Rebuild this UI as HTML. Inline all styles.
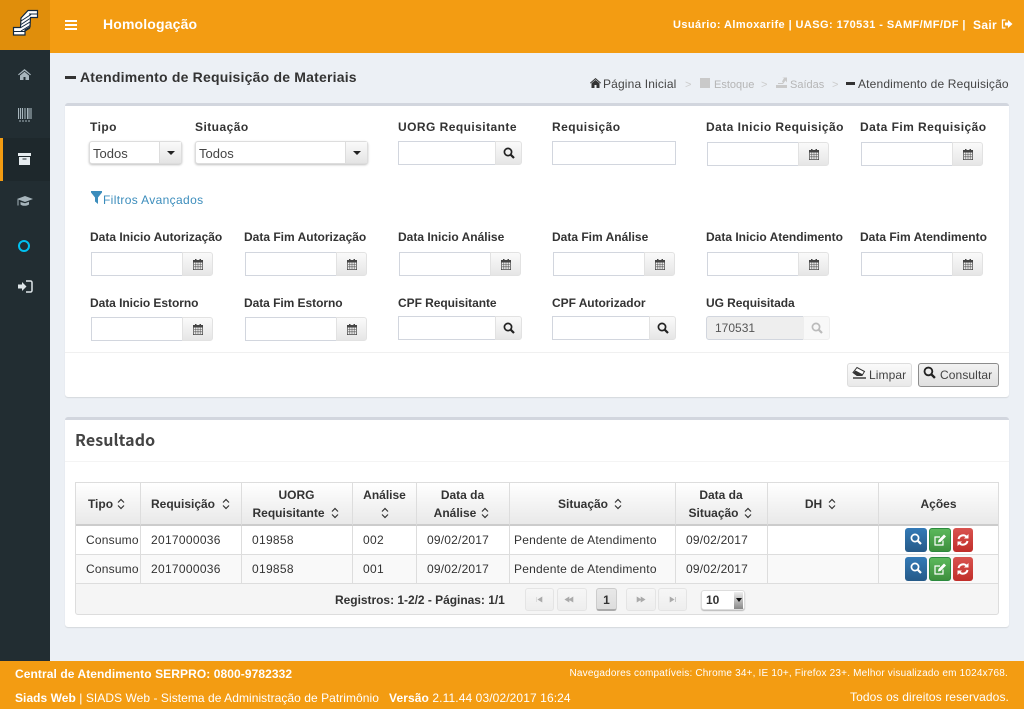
<!DOCTYPE html>
<html lang="pt-BR"><head><meta charset="utf-8"><title>Atendimento de Requisição de Materiais</title>
<style>
*{box-sizing:border-box}
html,body{margin:0;padding:0}
body{width:1024px;height:709px;position:relative;overflow:hidden;background:#ecf0f5;font:12px "Liberation Sans",sans-serif;color:#333}
.a,.l,.i,.b,.c,.t,.h,svg.p{position:absolute}
.l{font-weight:bold;font-size:12px;line-height:14px;color:#333;white-space:nowrap;letter-spacing:0}
.l.r1{letter-spacing:.45px}
.l.r3{letter-spacing:-.05px}
.i{height:24px;background:#fff;border:1px solid #d2d6de;font-size:12px;line-height:22px;padding-left:3px;color:#444}
.b{height:24px;width:32px;background:linear-gradient(#fafafa,#e6e6e6);border:1px solid #e2e2e2;border-radius:0 3px 3px 0}
.b svg{position:absolute;left:9px;top:5px}
.c{height:23px;background:#fff;border:1px solid #ddd;border-radius:3px;box-shadow:0 1px 2px rgba(0,0,0,.25);line-height:23px;padding-left:3px;font-size:13px;color:#444}
.c i{position:absolute;right:0;top:0;bottom:0;width:22px;background:linear-gradient(#fafafa,#e4e4e4);border-left:1px solid #ddd}
.c i:after{content:"";position:absolute;left:7px;top:9px;border:4px solid transparent;border-top:4px solid #222;border-bottom:0}
.t{white-space:nowrap;font-size:12px;line-height:14px;color:#333}
.d{letter-spacing:.2px}
.n{letter-spacing:.3px}
.h{background:linear-gradient(#fff,#e9e9e9);border-right:1px solid #ddd;border-bottom:2px solid #ccc;font-weight:bold;font-size:12px;line-height:18px;text-align:center;color:#333;display:flex;align-items:center;justify-content:center;top:483px;height:43px}
.pg{position:absolute;top:588px;height:23px;width:29px;border:1px solid #e4e4e4;border-radius:3px;background:linear-gradient(#f6f6f6,#eee)}
.act{position:absolute;width:22px;height:24px;border-radius:3px}
.sv{vertical-align:-2px}
.up{position:relative;left:1px}
</style></head>
<body>
<svg width="0" height="0" style="position:absolute">
<symbol id="cal" viewBox="0 0 12 12"><path fill="#444" d="M1 2h2V1h1.500v1h3V1H9v1h2v10H1zM1.700 4.500V11.300h8.600V4.500z"/><path stroke="#555" stroke-width=".6" fill="none" d="M3.800 4.500V11M6 4.500V11M8.200 4.500V11M2 6.500h8M2 8.800h8"/></symbol>
<symbol id="sr" viewBox="0 0 12 12"><circle cx="5" cy="5" r="3.600" fill="none" stroke="currentColor" stroke-width="1.700"/><path d="M7.700 7.700L11 11" stroke="currentColor" stroke-width="2.200"/></symbol>
<symbol id="ed" viewBox="0 0 14 14"><path d="M10 7.500V12H2V4h5" fill="none" stroke="#fff" stroke-width="1.200"/><path d="M5 9.500l.5-2.500L11 1.500l2 2L7.500 9z" fill="#fff"/></symbol>
<symbol id="rf" viewBox="0 0 14 14"><path d="M2.500 6a4.700 4.700 0 0 1 8-2.200" fill="none" stroke="#fff" stroke-width="2"/><path d="M12.500 1v4.500H8z" fill="#fff"/><path d="M11.500 8a4.700 4.700 0 0 1-8 2.200" fill="none" stroke="#fff" stroke-width="2"/><path d="M1.500 13V8.500H6z" fill="#fff"/></symbol>
<symbol id="so" viewBox="0 0 8 12"><path d="M1 4.500L4 1.500l3 3M1 7.500l3 3 3-3" fill="none" stroke="#333" stroke-width="1.200"/></symbol>
</svg>

<!-- top bar -->
<div class="a" style="left:0;top:0;width:1024px;height:53px;background:#f39c12"></div>
<div class="a" style="left:0;top:0;width:50px;height:50px;background:#e08e0b"></div>
<svg class="p" style="left:0;top:0" width="50" height="50" viewBox="0 0 50 50"><path d="M13.500 27.500H20.500L21 18 28 10.500H37.500V17.500H30.500L30 27 25 30V35H13.500z" fill="#fff" stroke="#12283f" stroke-width="1.200"/><path d="M14 31.500H24.500L30 28M21 21L31 14.500M21 24.500L30 18.500M21 27.500L30 22M21 31L30 25.500" fill="none" stroke="#12283f" stroke-width="1"/><path d="M29 14H37.500" stroke="#12283f"/></svg>
<div class="a" style="left:65px;top:20px;width:12px;height:2px;background:#fff"></div>
<div class="a" style="left:65px;top:24px;width:12px;height:2px;background:#fff"></div>
<div class="a" style="left:65px;top:28px;width:12px;height:2px;background:#fff"></div>
<div class="t" style="left:103px;top:16px;font-size:14px;line-height:17px;font-weight:bold;color:#fff;letter-spacing:.15px">Homologação</div>
<div class="t" style="left:673px;top:18px;font-size:11px;font-weight:bold;color:#fff;letter-spacing:.42px">Usuário: Almoxarife | UASG: 170531 - SAMF/MF/DF |</div>
<div class="t" style="left:973px;top:18px;font-size:12px;color:#fff;letter-spacing:.35px;font-weight:bold">Sair</div>
<svg class="p" style="left:1001px;top:18px" width="12" height="12" viewBox="0 0 12 12"><path d="M4.500 2H1.500v8h3" fill="none" stroke="#fff" stroke-width="1.300"/><path d="M4 4.500h3V2l4.500 4L7 10V7.500H4z" fill="#fff"/></svg>

<!-- sidebar -->
<div class="a" style="left:0;top:50px;width:50px;height:611px;background:#222d32"></div>
<div class="a" style="left:0;top:138px;width:50px;height:43px;background:#1e282c;border-left:3px solid #f39c12"></div>
<svg class="p" style="left:18px;top:69px" width="13" height="11" viewBox="0 0 13 11"><path d="M6.500 0L13 5.500l-.8.8L6.500 1.700.8 6.300 0 5.500zM2 6.500l4.500-3.700L11 6.500V11H7.500V8h-2v3H2z" fill="#a7b5bc"/></svg>
<svg class="p" style="left:18px;top:108px" width="14" height="14" viewBox="0 0 14 14"><path d="M.5 0v11M2.500 0v11M4.500 0v11M7 0v11M9.500 0v11M11 0v11M13 0v11" stroke="#a7b5bc" stroke-width="1.100"/><path d="M1 13h12" stroke="#a7b5bc" stroke-dasharray="2 1"/></svg>
<svg class="p" style="left:18px;top:153px" width="13" height="12" viewBox="0 0 13 12"><path d="M0 0h13v3H0zM1 4h11v8H1z" fill="#e6ecef"/><path d="M4.500 5.500h4v1h-4z" fill="#222d32"/></svg>
<svg class="p" style="left:17px;top:195px" width="16" height="13" viewBox="0 0 16 13"><path d="M8 1l8 3-8 3-8-3zM3.500 7v2.500C5 11.200 10 11.200 12 9.500V6.700L8 8.200z" fill="#a7b5bc"/><path d="M1 4.500v6" stroke="#a7b5bc"/></svg>
<div class="a" style="left:18px;top:240px;width:12px;height:12px;border:2px solid #00c0ef;border-radius:50%"></div>
<svg class="p" style="left:18px;top:280px" width="15" height="13" viewBox="0 0 15 13"><path d="M0 4.500h4V2l4.500 4.500L4 11V8.500H0z" fill="#dfe6e9"/><path d="M8 1h4.500a1.500 1.500 0 0 1 1.500 1.500v8a1.500 1.500 0 0 1-1.500 1.500H8" fill="none" stroke="#dfe6e9" stroke-width="1.500"/></svg>

<!-- page title & breadcrumb -->
<div class="a" style="left:65px;top:76px;width:11px;height:3px;background:#333"></div>
<div class="t" style="left:80px;top:69px;font-size:14px;line-height:17px;font-weight:bold;letter-spacing:.2px">Atendimento de Requisição de Materiais</div>
<svg class="p" style="left:590px;top:78px" width="11" height="10" viewBox="0 0 11 10"><path d="M5.500 0L11 4.800l-.6.700L5.500 1.400.6 5.500 0 4.800zM1.500 5.300L5.500 2l4 3.300V10H6.500V7h-2v3h-3z" fill="#333"/></svg>
<div class="t" style="left:603px;top:77px;color:#444;letter-spacing:.15px">Página Inicial</div>
<div class="t" style="left:685px;top:78px;color:#ccc;font-size:11px">&gt;</div>
<div class="a" style="left:700px;top:78px;width:10px;height:10px;background:#c9c9c9"></div>
<div class="t" style="left:714px;top:78px;color:#b5b5b5;font-size:11px">Estoque</div>
<div class="t" style="left:761px;top:78px;color:#ccc;font-size:11px">&gt;</div>
<svg class="p" style="left:776px;top:77px" width="11" height="11" viewBox="0 0 11 11"><path d="M0 8h11v3H0zM2 6h5l-1-1.500L8 1l-2-.5h5v5L9.500 3.500 7 7H2z" fill="#c9c9c9"/></svg>
<div class="t" style="left:790px;top:78px;color:#b5b5b5;font-size:11px">Saídas</div>
<div class="t" style="left:832px;top:78px;color:#ccc;font-size:11px">&gt;</div>
<div class="a" style="left:846px;top:82px;width:9px;height:3px;background:#333"></div>
<div class="t" style="left:858px;top:77px;color:#444;letter-spacing:.16px">Atendimento de Requisição</div>

<!-- filter panel -->
<div class="a" style="left:65px;top:103px;width:944px;height:294px;background:#fff;border-top:3px solid #d2d6de;border-radius:3px;box-shadow:0 1px 1px rgba(0,0,0,.1)"></div>
<div class="a" style="left:65px;top:352px;width:944px;height:1px;background:#f0f0f0"></div>

<div class="l r1" style="left:90px;top:120px">Tipo</div>
<div class="l r1" style="left:195px;top:120px">Situação</div>
<div class="l r1" style="left:398px;top:120px">UORG Requisitante</div>
<div class="l r1" style="left:552px;top:120px">Requisição</div>
<div class="l r1" style="left:706px;top:120px">Data Inicio Requisição</div>
<div class="l r1" style="left:860px;top:120px">Data Fim Requisição</div>

<div class="c" style="left:89px;top:141px;width:93px">Todos<i></i></div>
<div class="c" style="left:195px;top:141px;width:173px">Todos<i></i></div>
<div class="i" style="left:398px;top:141px;width:98px"></div><div class="b" style="left:495px;top:141px;width:27px"><svg width="12" height="12" style="left:7px;color:#222"><use href="#sr"/></svg></div>
<div class="i" style="left:552px;top:141px;width:124px"></div>
<div class="i" style="left:707px;top:142px;width:92px"></div><div class="b" style="left:798px;top:142px;width:31px"><svg width="12" height="12"><use href="#cal"/></svg></div>
<div class="i" style="left:861px;top:142px;width:92px"></div><div class="b" style="left:952px;top:142px;width:31px"><svg width="12" height="12"><use href="#cal"/></svg></div>

<svg class="p" style="left:91px;top:191px" width="11" height="13" viewBox="0 0 11 13"><path d="M0 0h11v1.500L7 6.500V13L4 10.500v-4L0 1.500z" fill="#3c8dbc"/></svg>
<div class="t" style="left:103px;top:193px;color:#3c8dbc;letter-spacing:.35px">Filtros Avançados</div>

<div class="l" style="left:90px;top:230px">Data Inicio Autorização</div>
<div class="l" style="left:244px;top:230px">Data Fim Autorização</div>
<div class="l" style="left:398px;top:230px">Data Inicio Análise</div>
<div class="l" style="left:552px;top:230px">Data Fim Análise</div>
<div class="l" style="left:706px;top:230px">Data Inicio Atendimento</div>
<div class="l" style="left:860px;top:230px">Data Fim Atendimento</div>

<div class="i" style="left:91px;top:252px;width:92px"></div><div class="b" style="left:182px;top:252px;width:31px"><svg width="12" height="12"><use href="#cal"/></svg></div>
<div class="i" style="left:245px;top:252px;width:92px"></div><div class="b" style="left:336px;top:252px;width:31px"><svg width="12" height="12"><use href="#cal"/></svg></div>
<div class="i" style="left:399px;top:252px;width:92px"></div><div class="b" style="left:490px;top:252px;width:31px"><svg width="12" height="12"><use href="#cal"/></svg></div>
<div class="i" style="left:553px;top:252px;width:92px"></div><div class="b" style="left:644px;top:252px;width:31px"><svg width="12" height="12"><use href="#cal"/></svg></div>
<div class="i" style="left:707px;top:252px;width:92px"></div><div class="b" style="left:798px;top:252px;width:31px"><svg width="12" height="12"><use href="#cal"/></svg></div>
<div class="i" style="left:861px;top:252px;width:92px"></div><div class="b" style="left:952px;top:252px;width:31px"><svg width="12" height="12"><use href="#cal"/></svg></div>

<div class="l r3" style="left:90px;top:296px">Data Inicio Estorno</div>
<div class="l r3" style="left:244px;top:296px">Data Fim Estorno</div>
<div class="l r3" style="left:398px;top:296px">CPF Requisitante</div>
<div class="l r3" style="left:552px;top:296px">CPF Autorizador</div>
<div class="l r3" style="left:706px;top:296px">UG Requisitada</div>

<div class="i" style="left:91px;top:317px;width:92px"></div><div class="b" style="left:182px;top:317px;width:31px"><svg width="12" height="12"><use href="#cal"/></svg></div>
<div class="i" style="left:245px;top:317px;width:92px"></div><div class="b" style="left:336px;top:317px;width:31px"><svg width="12" height="12"><use href="#cal"/></svg></div>
<div class="i" style="left:398px;top:316px;width:98px"></div><div class="b" style="left:495px;top:316px;width:27px"><svg width="12" height="12" style="left:7px;color:#222"><use href="#sr"/></svg></div>
<div class="i" style="left:552px;top:316px;width:98px"></div><div class="b" style="left:649px;top:316px;width:27px"><svg width="12" height="12" style="left:7px;color:#222"><use href="#sr"/></svg></div>
<div class="i" style="left:706px;top:316px;width:98px;background:#eee;padding-left:8px;color:#555;border-radius:3px 0 0 3px">170531</div><div class="b" style="left:803px;top:316px;width:27px;background:#f8f8f8;border-color:#eee"><svg width="12" height="12" style="left:7px;color:#bbb"><use href="#sr"/></svg></div>

<div class="a" style="left:847px;top:363px;width:65px;height:24px;border:1px solid #ddd;border-radius:3px;background:linear-gradient(#fafafa,#e9e9e9)"></div>
<svg class="p" style="left:852px;top:366px" width="15" height="14" viewBox="0 0 15 14"><path d="M1 6.500L5 1.500 12.500 5.500 10 9.500H5z" fill="#fff" stroke="#333"/><path d="M3.500 4.500L11 8.500 10 9.500H5L1.500 6.500z" fill="#333"/><path d="M1 12h13" stroke="#333" stroke-width="1.400"/></svg>
<div class="t" style="left:869px;top:368px;color:#444;letter-spacing:.1px">Limpar</div>
<div class="a" style="left:918px;top:363px;width:81px;height:24px;border:1px solid #8c8c8c;border-radius:3px;background:linear-gradient(#f2f2f2,#e0e0e0)"></div>
<svg class="p" style="left:923px;top:366px;color:#222" width="13" height="13"><use href="#sr"/></svg>
<div class="t" style="left:940px;top:368px;color:#444;letter-spacing:.1px">Consultar</div>

<!-- result panel -->
<div class="a" style="left:65px;top:417px;width:944px;height:210px;background:#fff;border-top:3px solid #d2d6de;border-radius:3px;box-shadow:0 1px 1px rgba(0,0,0,.1)"></div>
<div class="a" style="left:65px;top:461px;width:944px;height:1px;background:#f4f4f4"></div>
<div class="t" style="left:75px;top:429px;font:bold 16px/20px 'Noto Sans CJK JP','Liberation Sans',sans-serif;color:#444;letter-spacing:.1px">Resultado</div>

<div class="a" style="left:75px;top:482px;width:924px;height:133px;border:1px solid #ddd;border-radius:0 0 3px 3px;background:#f5f5f5"></div>
<div class="a" style="left:76px;top:526px;width:922px;height:29px;background:#fff"></div>
<div class="a" style="left:76px;top:555px;width:922px;height:29px;background:#f9f9f9"></div>
<div class="a" style="left:76px;top:554px;width:922px;height:1px;background:#ddd"></div>
<div class="a" style="left:76px;top:583px;width:922px;height:1px;background:#ddd"></div>

<div class="h" style="left:76px;width:65px;padding-right:3px">Tipo<svg width="8" height="12" style="margin-left:4px"><use href="#so"/></svg></div>
<div class="h" style="left:141px;width:101px;padding-right:1px">Requisição<svg width="8" height="12" style="margin-left:7px"><use href="#so"/></svg></div>
<div class="h" style="left:242px;width:111px;padding-right:3px"><span><span class="up">UORG</span><br>Requisitante<svg class="sv" width="8" height="12" style="margin-left:6px"><use href="#so"/></svg></span></div>
<div class="h" style="left:353px;width:64px"><span>Análise<br><svg width="8" height="12" style="vertical-align:-2px"><use href="#so"/></svg></span></div>
<div class="h" style="left:417px;width:93px;padding-right:3px"><span><span class="up">Data da</span><br>Análise<svg class="sv" width="8" height="12" style="margin-left:5px"><use href="#so"/></svg></span></div>
<div class="h" style="left:510px;width:166px;padding-right:5px">Situação<svg width="8" height="12" style="margin-left:6px"><use href="#so"/></svg></div>
<div class="h" style="left:676px;width:92px;padding-right:3px"><span><span class="up">Data da</span><br>Situação<svg class="sv" width="8" height="12" style="margin-left:5px"><use href="#so"/></svg></span></div>
<div class="h" style="left:768px;width:111px;padding-right:5px">DH<svg width="8" height="12" style="margin-left:6px"><use href="#so"/></svg></div>
<div class="h" style="left:879px;width:119px;border-right:0">Ações</div>

<div class="a" style="left:140px;top:526px;width:1px;height:58px;background:#ddd"></div>
<div class="a" style="left:241px;top:526px;width:1px;height:58px;background:#ddd"></div>
<div class="a" style="left:352px;top:526px;width:1px;height:58px;background:#ddd"></div>
<div class="a" style="left:416px;top:526px;width:1px;height:58px;background:#ddd"></div>
<div class="a" style="left:509px;top:526px;width:1px;height:58px;background:#ddd"></div>
<div class="a" style="left:675px;top:526px;width:1px;height:58px;background:#ddd"></div>
<div class="a" style="left:767px;top:526px;width:1px;height:58px;background:#ddd"></div>
<div class="a" style="left:878px;top:526px;width:1px;height:58px;background:#ddd"></div>

<div class="t d" style="left:86px;top:533px">Consumo</div><div class="t n" style="left:151px;top:533px">2017000036</div><div class="t n" style="left:252px;top:533px">019858</div><div class="t n" style="left:363px;top:533px">002</div><div class="t d" style="left:427px;top:533px">09/02/2017</div><div class="t d" style="left:514px;top:533px">Pendente de Atendimento</div><div class="t d" style="left:686px;top:533px">09/02/2017</div>
<div class="t d" style="left:86px;top:562px">Consumo</div><div class="t n" style="left:151px;top:562px">2017000036</div><div class="t n" style="left:252px;top:562px">019858</div><div class="t n" style="left:363px;top:562px">001</div><div class="t d" style="left:427px;top:562px">09/02/2017</div><div class="t d" style="left:514px;top:562px">Pendente de Atendimento</div><div class="t d" style="left:686px;top:562px">09/02/2017</div>

<div class="act" style="left:905px;top:528px;background:linear-gradient(#337ab7,#265a88)"></div><svg class="p" style="left:910px;top:533px;color:#fff" width="12" height="12"><use href="#sr"/></svg>
<div class="act" style="left:929px;top:528px;background:linear-gradient(#5cb85c,#3e8f3e);border:1px solid #2b8a3e"></div><svg class="p" style="left:933px;top:533px" width="14" height="14"><use href="#ed"/></svg>
<div class="act" style="left:953px;top:528px;width:20px;background:linear-gradient(#d9534f,#c12e2a)"></div><svg class="p" style="left:956px;top:533px" width="14" height="14"><use href="#rf"/></svg>
<div class="act" style="left:905px;top:557px;background:linear-gradient(#337ab7,#265a88)"></div><svg class="p" style="left:910px;top:562px;color:#fff" width="12" height="12"><use href="#sr"/></svg>
<div class="act" style="left:929px;top:557px;background:linear-gradient(#5cb85c,#3e8f3e);border:1px solid #2b8a3e"></div><svg class="p" style="left:933px;top:562px" width="14" height="14"><use href="#ed"/></svg>
<div class="act" style="left:953px;top:557px;width:20px;background:linear-gradient(#d9534f,#c12e2a)"></div><svg class="p" style="left:956px;top:562px" width="14" height="14"><use href="#rf"/></svg>

<!-- pager -->
<div class="t" style="left:335px;top:593px;font-weight:bold;letter-spacing:-.03px">Registros: 1-2/2 - Páginas: 1/1</div>
<div class="pg" style="left:525px"></div><div class="pg" style="left:557px;width:30px"></div>
<div class="pg" style="left:596px;width:21px;background:linear-gradient(#e8e8e8,#ddd);border-color:#ccc;border-bottom:2px solid #aaa;font-weight:bold;text-align:center;line-height:22px;font-size:12px">1</div>
<div class="pg" style="left:626px;width:30px"></div><div class="pg" style="left:658px"></div>
<svg class="p" style="left:536px;top:596px" width="140" height="7" viewBox="0 0 140 7"><path d="M0 1v5M2 3.500L6 1v5zM29 3.500L33 1v5zM33 3.500L37 1v5zM101 1v5l4-2.500zM105 1v5l4-2.500zM134 1v5l4-2.500zM139.500 1v5" fill="#aaa" stroke="#aaa" stroke-width=".6"/></svg>
<div class="a" style="left:701px;top:590px;width:44px;height:20px;background:#fff;border:1px solid #ddd;border-radius:3px;box-shadow:0 1px 1px rgba(0,0,0,.25);font-weight:bold;font-size:12px;line-height:18px;padding-left:4px;color:#333">10<span style="position:absolute;right:1px;top:1px;bottom:0;width:9px;background:linear-gradient(#eee,#888)"></span><span style="position:absolute;right:2px;top:7px;border:3px solid transparent;border-top:4px solid #111;border-bottom:0"></span></div>

<!-- footer -->
<div class="a" style="left:0;top:661px;width:1024px;height:48px;background:#f39c12"></div>
<div class="t" style="left:15px;top:667px;font-size:12px;font-weight:bold;color:#fff;letter-spacing:.08px">Central de Atendimento SERPRO: 0800-9782332</div>
<div class="t" style="right:16px;top:667px;font-size:10px;color:#fff;letter-spacing:.19px">Navegadores compatíveis: Chrome 34+, IE 10+, Firefox 23+. Melhor visualizado em 1024x768.</div>
<div class="t" style="left:15px;top:691px;font-size:12px;color:#fff;letter-spacing:.05px"><b>Siads Web</b> | SIADS Web - Sistema de Administração de Patrimônio</div>
<div class="t" style="left:389px;top:691px;font-size:12px;color:#fff;letter-spacing:.1px"><b>Versão</b> 2.11.44 03/02/2017 16:24</div>
<div class="t" style="right:15px;top:690px;font-size:12px;color:#fff;letter-spacing:.1px">Todos os direitos reservados.</div>
</body></html>
